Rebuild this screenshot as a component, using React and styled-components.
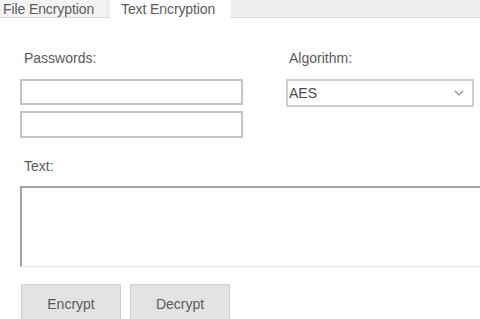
import React from "react";
import styled, { createGlobalStyle } from "styled-components";

const GlobalStyle = createGlobalStyle`
  html, body {
    margin: 0;
    padding: 0;
    background: #ffffff;
    overflow: hidden;
  }
  body {
    font-family: "Liberation Sans", Arial, sans-serif;
    color: #3a3a3a;
  }
`;

const Window = styled.div`
  width: 480px;
  height: 319px;
  overflow: hidden;
  background: #fff;
`;

const TabStrip = styled.div`
  display: flex;
  height: 17px;
  background: #eeeeee;
  border-bottom: 1px solid #dadada;
`;

const Tab = styled.div`
  display: flex;
  align-items: center;
  box-sizing: border-box;
  padding-left: ${(p) => (p.$active ? "11px" : "3px")};
  margin-right: ${(p) => (p.$active ? "0" : "3px")};
  width: ${(p) => (p.$active ? "121px" : "107px")};
  font-size: 14px;
  letter-spacing: -0.1px;
  white-space: nowrap;
  color: #5a5a5a;
  background: ${(p) => (p.$active ? "#ffffff" : "#f4f4f4")};
  height: ${(p) => (p.$active ? "18px" : "17px")};
  border-right: 1px solid ${(p) => (p.$active ? "#f7f7f7" : "#e6e6e6")};
`;

const Panel = styled.div`
  padding: 32px 0 0 20px;
`;

const FormGrid = styled.div`
  display: grid;
  grid-template-columns: 223px 188px;
  column-gap: 43px;
`;

const Column = styled.div`
  display: flex;
  flex-direction: column;
`;

const Label = styled.div`
  height: 16px;
  line-height: 16px;
  font-size: 14px;
  color: #5a5a5a;
  padding-left: ${(p) => p.$indent || 4}px;
  margin-bottom: 13px;
`;

const TextBox = styled.div`
  box-sizing: border-box;
  height: ${(p) => p.$h || 26}px;
  border: 2px solid #c4c4c4;
  background: #fff;
  & + & {
    margin-top: 6px;
  }
`;

const Select = styled.div`
  box-sizing: border-box;
  height: 28px;
  border: 2px solid #cdcdcd;
  display: flex;
  align-items: center;
  justify-content: space-between;
  padding: 0 8px 0 1px;
  font-size: 14px;
  color: #4a4a4a;
`;

const TextLabel = styled(Label)`
  margin-top: 20px;
  margin-bottom: 12px;
`;

const TextArea = styled.div`
  box-sizing: border-box;
  width: 480px;
  height: 81px;
  background: #fff;
  border-top: 2px solid #a3a3a3;
  border-left: 2px solid #a3a3a3;
  border-bottom: 1px solid #e6e6e6;
`;

const ButtonRow = styled.div`
  display: flex;
  gap: 9px;
  margin-top: 17px;
  padding-left: 1px;
`;

const Button = styled.div`
  box-sizing: border-box;
  width: 100px;
  height: 40px;
  background: #e3e3e3;
  border: 1px solid #cfcfcf;
  display: flex;
  align-items: center;
  justify-content: center;
  font-size: 14px;
  color: #5a5a5a;
`;

const Chevron = () => (
  <svg width="10" height="6" viewBox="0 0 10 6" fill="none">
    <path d="M1 1l4 4 4-4" stroke="#8a8a8a" strokeWidth="1.2" />
  </svg>
);

export default function App() {
  return (
    <Window>
      <GlobalStyle />
      <TabStrip>
        <Tab>File Encryption</Tab>
        <Tab $active>Text Encryption</Tab>
      </TabStrip>
      <Panel>
        <FormGrid>
          <Column>
            <Label>Passwords:</Label>
            <TextBox />
            <TextBox $h={27} />
          </Column>
          <Column>
            <Label $indent={3}>Algorithm:</Label>
            <Select>
              <span>AES</span>
              <Chevron />
            </Select>
          </Column>
        </FormGrid>
        <TextLabel>Text:</TextLabel>
        <TextArea />
        <ButtonRow>
          <Button>Encrypt</Button>
          <Button>Decrypt</Button>
        </ButtonRow>
      </Panel>
    </Window>
  );
}
